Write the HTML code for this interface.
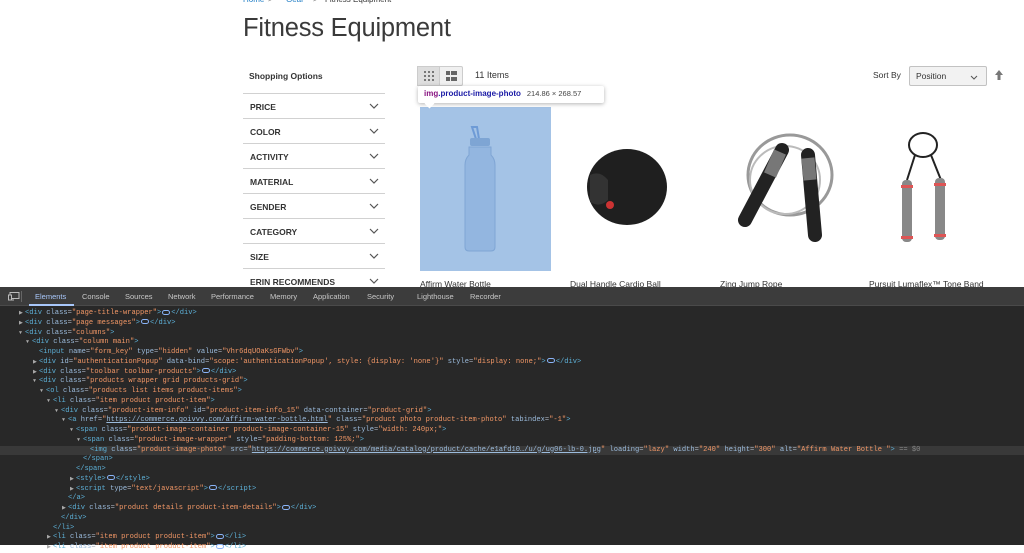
<!DOCTYPE html>
<html><head><meta charset="utf-8"><style>
*{margin:0;padding:0;box-sizing:border-box}
body{width:1024px;height:545px;overflow:hidden;background:#fff;font-family:"Liberation Sans",sans-serif;position:relative;color:#333}
.a{position:absolute;white-space:nowrap}
.crumb{font-size:8px;color:#1979c3;top:-5px}
h1{position:absolute;left:243px;top:14px;font-size:25.5px;font-weight:300;color:#3a3a3a;letter-spacing:-0.2px}
.fl{position:absolute;left:243px;width:142px;height:25px;border-top:1px solid #d1d1d1;font-size:8.5px;font-weight:bold;color:#333;padding:8px 0 0 7px}
.fl svg{position:absolute;right:6px;top:9px}
.pn{font-size:8.5px;color:#333;top:279px}
.dt{position:absolute;left:0;top:287px;width:1024px;height:258px;background:#282828}
.tb{position:absolute;left:0;top:0;width:1024px;height:19px;background:#3c3c3c;border-bottom:1px solid #4a4a4a;font-size:7.5px;color:#c8c8c8}
.tb span{position:absolute;top:5px}
.code{position:absolute;left:0;top:22px;width:1024px;font-family:"Liberation Mono",monospace;font-size:7.1px;color:#a8b0bc}
.l{position:relative;height:9.75px;line-height:9.75px;white-space:nowrap}
.l i{font-style:normal;position:absolute;font-size:5px;color:#aaa}
.t{color:#5db0d7}.n{color:#9bbbdc}.v{color:#f29766}.u{color:#9bbbdc;text-decoration:underline}
.e{display:inline-block;width:8px;height:5px;border:1px solid #8ab4f8;border-radius:3px;vertical-align:middle;margin:0 1px}
</style></head><body>
<div class="a crumb" style="left:243px">Home</div>
<div class="a crumb" style="left:268px;color:#777">&gt;</div>
<div class="a crumb" style="left:286px">Gear</div>
<div class="a crumb" style="left:313px;color:#777">&gt;</div>
<div class="a crumb" style="left:325px;color:#333">Fitness Equipment</div>
<h1>Fitness Equipment</h1>
<div class="a" style="left:249px;top:71px;font-size:8.5px;font-weight:bold">Shopping Options</div>
<div class="fl" style="top:93px">PRICE<svg width="10" height="6"><path d="M1 1L5 5L9 1" stroke="#555" fill="none" stroke-width="1.2"/></svg></div>
<div class="fl" style="top:118px">COLOR<svg width="10" height="6"><path d="M1 1L5 5L9 1" stroke="#555" fill="none" stroke-width="1.2"/></svg></div>
<div class="fl" style="top:143px">ACTIVITY<svg width="10" height="6"><path d="M1 1L5 5L9 1" stroke="#555" fill="none" stroke-width="1.2"/></svg></div>
<div class="fl" style="top:168px">MATERIAL<svg width="10" height="6"><path d="M1 1L5 5L9 1" stroke="#555" fill="none" stroke-width="1.2"/></svg></div>
<div class="fl" style="top:193px">GENDER<svg width="10" height="6"><path d="M1 1L5 5L9 1" stroke="#555" fill="none" stroke-width="1.2"/></svg></div>
<div class="fl" style="top:218px">CATEGORY<svg width="10" height="6"><path d="M1 1L5 5L9 1" stroke="#555" fill="none" stroke-width="1.2"/></svg></div>
<div class="fl" style="top:243px">SIZE<svg width="10" height="6"><path d="M1 1L5 5L9 1" stroke="#555" fill="none" stroke-width="1.2"/></svg></div>
<div class="fl" style="top:268px">ERIN RECOMMENDS<svg width="10" height="6"><path d="M1 1L5 5L9 1" stroke="#555" fill="none" stroke-width="1.2"/></svg></div>
<div class="a" style="left:417px;top:66px;width:46px;height:20px;border:1px solid #ccc;border-radius:2px;background:#f0f0f0"></div>
<div class="a" style="left:417px;top:66px;width:23px;height:20px;background:#dedede;border:1px solid #ccc"></div>
<svg class="a" style="left:424px;top:71px" width="10" height="10"><g fill="#777"><rect x="0" y="0" width="2" height="2"/><rect x="4" y="0" width="2" height="2"/><rect x="8" y="0" width="2" height="2"/><rect x="0" y="4" width="2" height="2"/><rect x="4" y="4" width="2" height="2"/><rect x="8" y="4" width="2" height="2"/><rect x="0" y="8" width="2" height="2"/><rect x="4" y="8" width="2" height="2"/><rect x="8" y="8" width="2" height="2"/></g></svg>
<svg class="a" style="left:446px;top:71px" width="11" height="10"><g fill="#666"><rect x="0" y="0" width="4" height="4"/><rect x="5" y="0" width="6" height="4"/><rect x="0" y="6" width="4" height="4"/><rect x="5" y="6" width="6" height="4"/></g></svg>
<div class="a" style="left:475px;top:70px;font-size:9px">11 Items</div>
<div class="a" style="left:873px;top:70px;font-size:8.5px">Sort By</div>
<div class="a" style="left:909px;top:66px;width:78px;height:20px;border:1px solid #c2c2c2;border-radius:2px;background:#f2f2f2;font-size:8.5px;padding:4px 0 0 6px">Position<svg style="position:absolute;right:8px;top:8px" width="8" height="5"><path d="M1 1L4 4L7 1" stroke="#555" fill="none"/></svg></div>
<svg class="a" style="left:995px;top:70px" width="8" height="10"><path d="M4 0L8 5H5.5V10H2.5V5H0Z" fill="#777"/></svg>
<div class="a" style="left:420px;top:107px;width:131px;height:164px;background:#a4c3e6"></div>
<svg class="a" style="left:420px;top:107px" width="131" height="164">
<path d="M52 20h5l2 12h-3z" fill="none" stroke="#6e9bd6" stroke-width="2"/>
<rect x="50" y="31" width="20" height="8" rx="2" fill="#7ea5d4"/>
<path d="M49 40h22v8q4 4 4 10v82q0 4-4 4h-22q-4 0-4-4v-82q0-6 4-10z" fill="#93b6e0" stroke="#7fa5d4"/>
</svg>
<div class="a" style="left:418px;top:86px;width:186px;height:17px;background:#fff;border-radius:2px;box-shadow:0 1px 4px rgba(0,0,0,.3);font-size:8px;padding:3px 0 0 6px"><b style="color:#881280;font-weight:bold">img</b><b style="color:#1a1aa6">.product-image-photo</b><span style="color:#444;margin-left:6px;font-size:7.5px">214.86 × 268.57</span></div>
<div class="a" style="left:426px;top:100px;width:7px;height:7px;background:#fff;transform:rotate(45deg)"></div>
<svg class="a" style="left:580px;top:145px" width="90" height="85"><ellipse cx="47" cy="42" rx="40" ry="38" fill="#1f1f1f"/><path d="M10 30q10-5 18 5v20q-8 8-18 2z" fill="#333"/><circle cx="30" cy="60" r="4" fill="#c33"/></svg>
<svg class="a" style="left:720px;top:130px" width="120" height="125"><ellipse cx="70" cy="45" rx="42" ry="40" fill="none" stroke="#999" stroke-width="3"/><ellipse cx="65" cy="50" rx="35" ry="34" fill="none" stroke="#bbb" stroke-width="2"/><path d="M62 20L25 90" stroke="#222" stroke-width="14" stroke-linecap="round"/><path d="M88 25L95 105" stroke="#222" stroke-width="14" stroke-linecap="round"/><path d="M60 22L50 45" stroke="#777" stroke-width="13"/><path d="M88 28L90 50" stroke="#777" stroke-width="13"/></svg>
<svg class="a" style="left:895px;top:130px" width="70" height="120"><ellipse cx="28" cy="15" rx="14" ry="12" fill="none" stroke="#222" stroke-width="2"/><path d="M20 25L12 50M36 25L46 50" stroke="#222" stroke-width="2"/><rect x="7" y="50" width="10" height="62" rx="4" fill="#888"/><rect x="40" y="48" width="10" height="62" rx="4" fill="#888"/><g fill="#d55"><rect x="6" y="55" width="12" height="3"/><rect x="6" y="106" width="12" height="3"/><rect x="39" y="53" width="12" height="3"/><rect x="39" y="104" width="12" height="3"/></g></svg>
<div class="a pn" style="left:420px">Affirm Water Bottle</div>
<div class="a pn" style="left:570px">Dual Handle Cardio Ball</div>
<div class="a pn" style="left:720px">Zing Jump Rope</div>
<div class="a pn" style="left:869px">Pursuit Lumaflex™ Tone Band</div>
<div class="dt">
<div class="tb">
<svg style="position:absolute;left:8px;top:5px" width="12" height="9"><rect x="2" y="0.5" width="9" height="6" fill="none" stroke="#bbb"/><path d="M0 8h6" stroke="#bbb"/><rect x="0.5" y="3" width="3" height="5" fill="#3c3c3c" stroke="#bbb"/></svg>
<div style="position:absolute;left:21px;top:4px;width:1px;height:11px;background:#666"></div>
<span style="left:35px;color:#a8c7fa">Elements</span>
<div style="position:absolute;left:29px;top:17px;width:45px;height:2px;background:#a8c7fa"></div>
<span style="left:82px">Console</span><span style="left:125px">Sources</span><span style="left:168px">Network</span><span style="left:211px">Performance</span><span style="left:270px">Memory</span><span style="left:313px">Application</span><span style="left:367px">Security</span><span style="left:417px">Lighthouse</span><span style="left:470px">Recorder</span>
</div>
<div class="code">
<div class="l" style="padding-left:25px"><i style="left:19px">▶</i><span class="t">&lt;div </span><span class="n">class</span>=<span class="v">"page-title-wrapper"</span><span class="t">&gt;</span><span class="e"></span><span class="t">&lt;/div&gt;</span></div>
<div class="l" style="padding-left:25px"><i style="left:19px">▶</i><span class="t">&lt;div </span><span class="n">class</span>=<span class="v">"page messages"</span><span class="t">&gt;</span><span class="e"></span><span class="t">&lt;/div&gt;</span></div>
<div class="l" style="padding-left:25px"><i style="left:19px">▼</i><span class="t">&lt;div </span><span class="n">class</span>=<span class="v">"columns"</span><span class="t">&gt;</span></div>
<div class="l" style="padding-left:32px"><i style="left:26px">▼</i><span class="t">&lt;div </span><span class="n">class</span>=<span class="v">"column main"</span><span class="t">&gt;</span></div>
<div class="l" style="padding-left:39px"><span class="t">&lt;input </span><span class="n">name</span>=<span class="v">"form_key"</span> <span class="n">type</span>=<span class="v">"hidden"</span> <span class="n">value</span>=<span class="v">"Vhr6dqUOaKsGFWbv"</span><span class="t">&gt;</span></div>
<div class="l" style="padding-left:39px"><i style="left:33px">▶</i><span class="t">&lt;div </span><span class="n">id</span>=<span class="v">"authenticationPopup"</span> <span class="n">data-bind</span>=<span class="v">"scope:'authenticationPopup', style: {display: 'none'}"</span> <span class="n">style</span>=<span class="v">"display: none;"</span><span class="t">&gt;</span><span class="e"></span><span class="t">&lt;/div&gt;</span></div>
<div class="l" style="padding-left:39px"><i style="left:33px">▶</i><span class="t">&lt;div </span><span class="n">class</span>=<span class="v">"toolbar toolbar-products"</span><span class="t">&gt;</span><span class="e"></span><span class="t">&lt;/div&gt;</span></div>
<div class="l" style="padding-left:39px"><i style="left:33px">▼</i><span class="t">&lt;div </span><span class="n">class</span>=<span class="v">"products wrapper grid products-grid"</span><span class="t">&gt;</span></div>
<div class="l" style="padding-left:46px"><i style="left:40px">▼</i><span class="t">&lt;ol </span><span class="n">class</span>=<span class="v">"products list items product-items"</span><span class="t">&gt;</span></div>
<div class="l" style="padding-left:53px"><i style="left:47px">▼</i><span class="t">&lt;li </span><span class="n">class</span>=<span class="v">"item product product-item"</span><span class="t">&gt;</span></div>
<div class="l" style="padding-left:61px"><i style="left:55px">▼</i><span class="t">&lt;div </span><span class="n">class</span>=<span class="v">"product-item-info"</span> <span class="n">id</span>=<span class="v">"product-item-info_15"</span> <span class="n">data-container</span>=<span class="v">"product-grid"</span><span class="t">&gt;</span></div>
<div class="l" style="padding-left:68px"><i style="left:62px">▼</i><span class="t">&lt;a </span><span class="n">href</span>=<span class="v">"</span><span class="u">https://commerce.goivvy.com/affirm-water-bottle.html</span><span class="v">"</span> <span class="n">class</span>=<span class="v">"product photo product-item-photo"</span> <span class="n">tabindex</span>=<span class="v">"-1"</span><span class="t">&gt;</span></div>
<div class="l" style="padding-left:76px"><i style="left:70px">▼</i><span class="t">&lt;span </span><span class="n">class</span>=<span class="v">"product-image-container product-image-container-15"</span> <span class="n">style</span>=<span class="v">"width: 240px;"</span><span class="t">&gt;</span></div>
<div class="l" style="padding-left:83px"><i style="left:77px">▼</i><span class="t">&lt;span </span><span class="n">class</span>=<span class="v">"product-image-wrapper"</span> <span class="n">style</span>=<span class="v">"padding-bottom: 125%;"</span><span class="t">&gt;</span></div>
<div class="l" style="padding-left:90px;background:#393939"><span class="t">&lt;img </span><span class="n">class</span>=<span class="v">"product-image-photo"</span> <span class="n">src</span>=<span class="v">"</span><span class="u">https://commerce.goivvy.com/media/catalog/product/cache/e1afd10…/u/g/ug06-lb-0.jpg</span><span class="v">"</span> <span class="n">loading</span>=<span class="v">"lazy"</span> <span class="n">width</span>=<span class="v">"240"</span> <span class="n">height</span>=<span class="v">"300"</span> <span class="n">alt</span>=<span class="v">"Affirm Water Bottle "</span><span class="t">&gt;</span> <span style="color:#888">== $0</span></div>
<div class="l" style="padding-left:83px"><span class="t">&lt;/span&gt;</span></div>
<div class="l" style="padding-left:76px"><span class="t">&lt;/span&gt;</span></div>
<div class="l" style="padding-left:76px"><i style="left:70px">▶</i><span class="t">&lt;style&gt;</span><span class="e"></span><span class="t">&lt;/style&gt;</span></div>
<div class="l" style="padding-left:76px"><i style="left:70px">▶</i><span class="t">&lt;script </span><span class="n">type</span>=<span class="v">"text/javascript"</span><span class="t">&gt;</span><span class="e"></span><span class="t">&lt;/script&gt;</span></div>
<div class="l" style="padding-left:68px"><span class="t">&lt;/a&gt;</span></div>
<div class="l" style="padding-left:68px"><i style="left:62px">▶</i><span class="t">&lt;div </span><span class="n">class</span>=<span class="v">"product details product-item-details"</span><span class="t">&gt;</span><span class="e"></span><span class="t">&lt;/div&gt;</span></div>
<div class="l" style="padding-left:61px"><span class="t">&lt;/div&gt;</span></div>
<div class="l" style="padding-left:53px"><span class="t">&lt;/li&gt;</span></div>
<div class="l" style="padding-left:53px"><i style="left:47px">▶</i><span class="t">&lt;li </span><span class="n">class</span>=<span class="v">"item product product-item"</span><span class="t">&gt;</span><span class="e"></span><span class="t">&lt;/li&gt;</span></div>
<div class="l" style="padding-left:53px"><i style="left:47px">▶</i><span class="t">&lt;li </span><span class="n">class</span>=<span class="v">"item product product-item"</span><span class="t">&gt;</span><span class="e"></span><span class="t">&lt;/li&gt;</span></div>
</div>
</div>
</body></html>
